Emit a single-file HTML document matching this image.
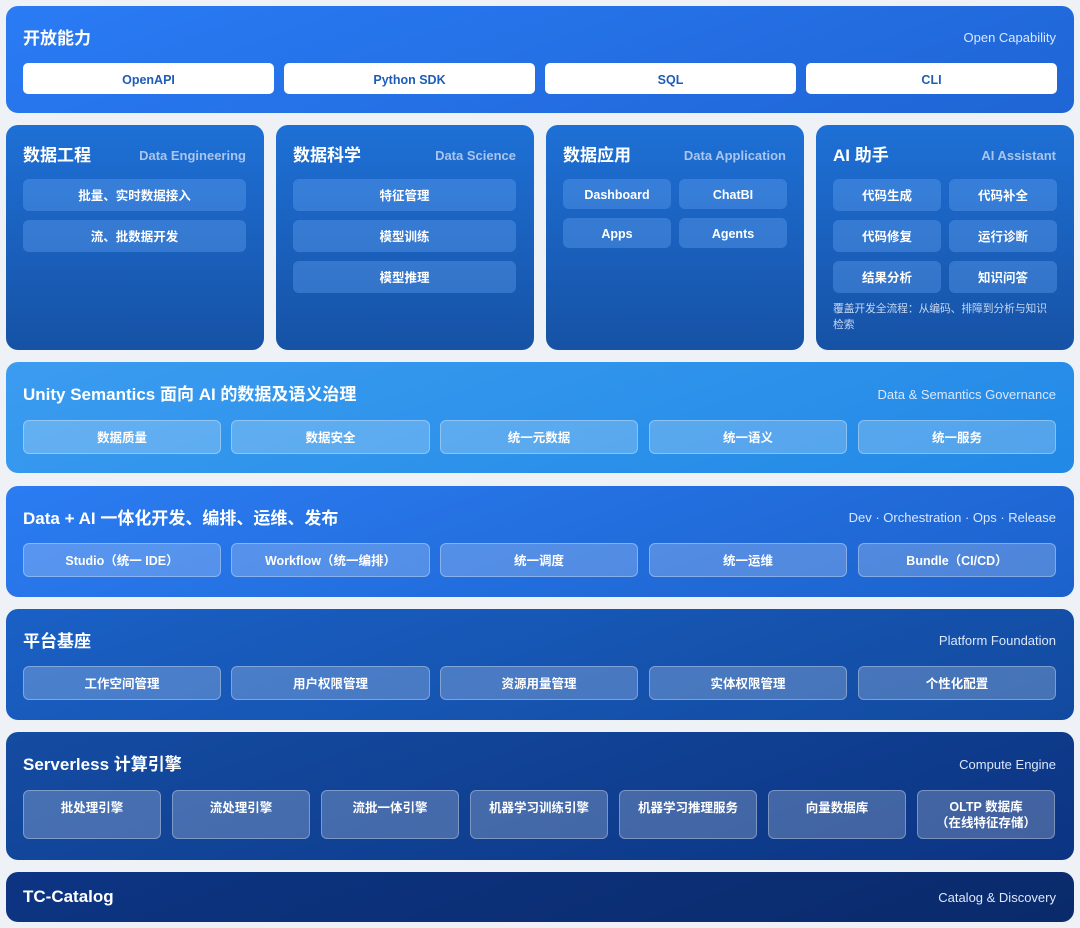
<!DOCTYPE html>
<html><head><meta charset="utf-8"><style>
*{box-sizing:border-box;margin:0;padding:0}
body{width:1080px;height:928px;background:#eef2f7;position:relative;font-family:"Liberation Sans","Noto Sans CJK SC",sans-serif;color:#fff;overflow:hidden}
.s{position:absolute;border-radius:12px}
.t{position:absolute;font-size:17px;font-weight:bold;white-space:nowrap;line-height:20px}
.sub{position:absolute;font-size:13px;color:#dbe7fb;white-space:nowrap;line-height:16px}
.b{position:absolute;display:flex;align-items:center;justify-content:center;font-size:12.5px;font-weight:bold;border-radius:6px;white-space:nowrap;line-height:15px;padding-top:3px}
.w{background:#fff;color:#1d5cb9;border-radius:5px}
.c{background:rgba(120,180,255,0.3)}
.o{background:rgba(255,255,255,0.22);border:1px solid rgba(255,255,255,0.3)}
.csub{position:absolute;font-size:13px;font-weight:bold;color:#a9c5ee;white-space:nowrap;line-height:16px}
</style></head><body>

<div class="s" style="left:6px;top:6px;width:1068px;height:107px;background:linear-gradient(160deg,#2a7bf5,#1f65d5)"></div>
<div class="t" style="left:23px;top:29px">开放能力</div>
<div class="sub" style="right:24px;top:30px">Open Capability</div>
<div class="b w" style="left:23px;top:63px;width:251px;height:31px">OpenAPI</div>
<div class="b w" style="left:284px;top:63px;width:251px;height:31px">Python SDK</div>
<div class="b w" style="left:545px;top:63px;width:251px;height:31px">SQL</div>
<div class="b w" style="left:806px;top:63px;width:251px;height:31px">CLI</div>

<div class="s" style="left:6px;top:125px;width:258px;height:225px;background:linear-gradient(180deg,#1e70d6,#1652a5)"></div>
<div class="s" style="left:276px;top:125px;width:258px;height:225px;background:linear-gradient(180deg,#1e70d6,#1652a5)"></div>
<div class="s" style="left:546px;top:125px;width:258px;height:225px;background:linear-gradient(180deg,#1e70d6,#1652a5)"></div>
<div class="s" style="left:816px;top:125px;width:258px;height:225px;background:linear-gradient(180deg,#1e70d6,#1652a5)"></div>

<div class="t" style="left:23px;top:146px">数据工程</div>
<div class="csub" style="right:834px;top:148px">Data Engineering</div>
<div class="b c" style="left:23px;top:179px;width:223px;height:32px">批量、实时数据接入</div>
<div class="b c" style="left:23px;top:220px;width:223px;height:32px">流、批数据开发</div>

<div class="t" style="left:293px;top:146px">数据科学</div>
<div class="csub" style="right:564px;top:148px">Data Science</div>
<div class="b c" style="left:293px;top:179px;width:223px;height:32px">特征管理</div>
<div class="b c" style="left:293px;top:220px;width:223px;height:32px">模型训练</div>
<div class="b c" style="left:293px;top:261px;width:223px;height:32px">模型推理</div>

<div class="t" style="left:563px;top:146px">数据应用</div>
<div class="csub" style="right:294px;top:148px">Data Application</div>
<div class="b c" style="left:563px;top:179px;width:108px;height:30px">Dashboard</div>
<div class="b c" style="left:679px;top:179px;width:108px;height:30px">ChatBI</div>
<div class="b c" style="left:563px;top:218px;width:108px;height:30px">Apps</div>
<div class="b c" style="left:679px;top:218px;width:108px;height:30px">Agents</div>

<div class="t" style="left:833px;top:146px">AI 助手</div>
<div class="csub" style="right:24px;top:148px">AI Assistant</div>
<div class="b c" style="left:833px;top:179px;width:108px;height:32px">代码生成</div>
<div class="b c" style="left:949px;top:179px;width:108px;height:32px">代码补全</div>
<div class="b c" style="left:833px;top:220px;width:108px;height:32px">代码修复</div>
<div class="b c" style="left:949px;top:220px;width:108px;height:32px">运行诊断</div>
<div class="b c" style="left:833px;top:261px;width:108px;height:32px">结果分析</div>
<div class="b c" style="left:949px;top:261px;width:108px;height:32px">知识问答</div>
<div style="position:absolute;left:833px;top:301px;width:224px;font-size:10.8px;letter-spacing:-0.1px;line-height:16px;color:#c6d7f2">覆盖开发全流程：从编码、排障到分析与知识<br>检索</div>

<div class="s" style="left:6px;top:362px;width:1068px;height:111px;background:linear-gradient(160deg,#3b9cf0,#2189e6)"></div>
<div class="t" style="left:23px;top:385px">Unity Semantics 面向 AI 的数据及语义治理</div>
<div class="sub" style="right:24px;top:387px">Data &amp; Semantics Governance</div>
<div class="b o" style="left:23px;top:420px;width:198px;height:34px">数据质量</div>
<div class="b o" style="left:231px;top:420px;width:199px;height:34px">数据安全</div>
<div class="b o" style="left:440px;top:420px;width:198px;height:34px">统一元数据</div>
<div class="b o" style="left:649px;top:420px;width:198px;height:34px">统一语义</div>
<div class="b o" style="left:858px;top:420px;width:198px;height:34px">统一服务</div>

<div class="s" style="left:6px;top:486px;width:1068px;height:111px;background:linear-gradient(160deg,#2b7cf2,#1c62cc)"></div>
<div class="t" style="left:23px;top:509px">Data + AI 一体化开发、编排、运维、发布</div>
<div class="sub" style="right:24px;top:510px">Dev · Orchestration · Ops · Release</div>
<div class="b o" style="left:23px;top:543px;width:198px;height:34px">Studio（统一 IDE）</div>
<div class="b o" style="left:231px;top:543px;width:199px;height:34px">Workflow（统一编排）</div>
<div class="b o" style="left:440px;top:543px;width:198px;height:34px">统一调度</div>
<div class="b o" style="left:649px;top:543px;width:198px;height:34px">统一运维</div>
<div class="b o" style="left:858px;top:543px;width:198px;height:34px">Bundle（CI/CD）</div>

<div class="s" style="left:6px;top:609px;width:1068px;height:111px;background:linear-gradient(160deg,#1a60c5,#124a9f)"></div>
<div class="t" style="left:23px;top:632px">平台基座</div>
<div class="sub" style="right:24px;top:633px">Platform Foundation</div>
<div class="b o" style="left:23px;top:666px;width:198px;height:34px">工作空间管理</div>
<div class="b o" style="left:231px;top:666px;width:199px;height:34px">用户权限管理</div>
<div class="b o" style="left:440px;top:666px;width:198px;height:34px">资源用量管理</div>
<div class="b o" style="left:649px;top:666px;width:198px;height:34px">实体权限管理</div>
<div class="b o" style="left:858px;top:666px;width:198px;height:34px">个性化配置</div>

<div class="s" style="left:6px;top:732px;width:1068px;height:128px;background:linear-gradient(160deg,#144ca2,#0c3483)"></div>
<div class="t" style="left:23px;top:755px">Serverless 计算引擎</div>
<div class="sub" style="right:24px;top:757px">Compute Engine</div>
<div class="b o" style="left:23px;top:790px;width:138px;height:49px;align-items:flex-start;padding-top:10px">批处理引擎</div>
<div class="b o" style="left:172px;top:790px;width:138px;height:49px;align-items:flex-start;padding-top:10px">流处理引擎</div>
<div class="b o" style="left:321px;top:790px;width:138px;height:49px;align-items:flex-start;padding-top:10px">流批一体引擎</div>
<div class="b o" style="left:470px;top:790px;width:138px;height:49px;align-items:flex-start;padding-top:10px">机器学习训练引擎</div>
<div class="b o" style="left:619px;top:790px;width:138px;height:49px;align-items:flex-start;padding-top:10px">机器学习推理服务</div>
<div class="b o" style="left:768px;top:790px;width:138px;height:49px;align-items:flex-start;padding-top:10px">向量数据库</div>
<div class="b o" style="left:917px;top:790px;width:138px;height:49px;display:block;text-align:center;padding-top:8px;line-height:16px">OLTP 数据库<br>（在线特征存储）</div>

<div class="s" style="left:6px;top:872px;width:1068px;height:50px;background:linear-gradient(160deg,#0d3584,#0a2a6a)"></div>
<div class="t" style="left:23px;top:887px">TC-Catalog</div>
<div class="sub" style="right:24px;top:890px">Catalog &amp; Discovery</div>
</body></html>
